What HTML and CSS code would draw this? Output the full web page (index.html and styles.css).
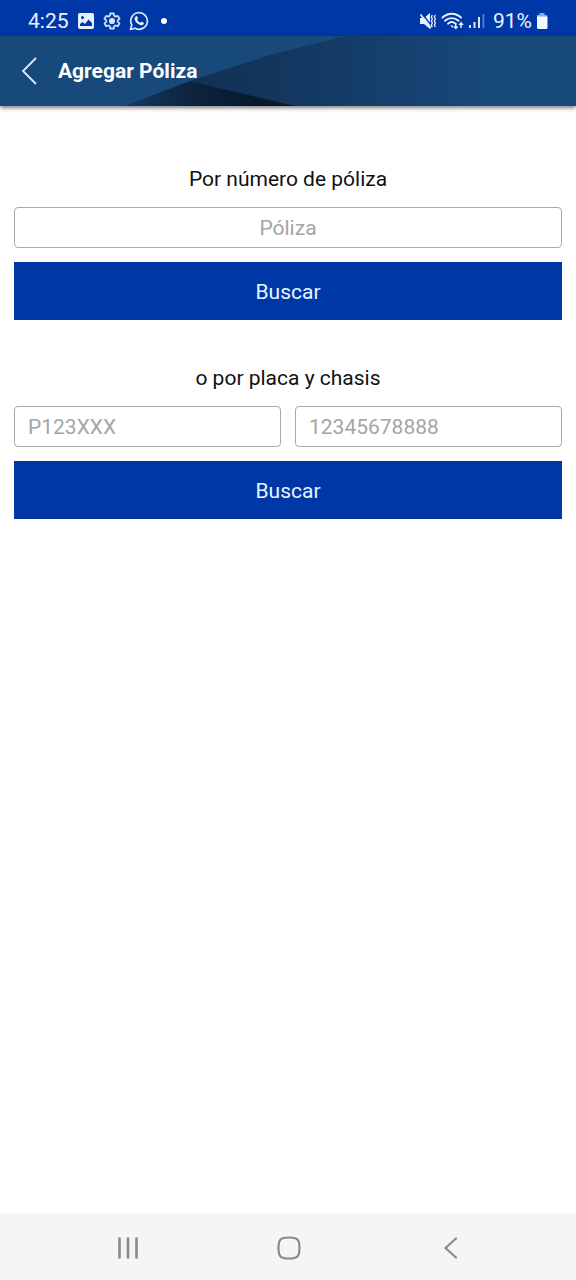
FILE: index.html
```html
<!DOCTYPE html>
<html lang="es">
<head>
  <meta charset="UTF-8">
  <meta name="viewport" content="width=device-width, initial-scale=1.0">
  <title>Agregar Póliza</title>
  <link rel="stylesheet" href="styles.css">
</head>
<body>
  <div class="status-bar">
    <div class="status-left">
      <span>4:25</span>
      <svg width="18" height="18" viewBox="0 0 18 18">
        <path fill="#e9f1ff" fill-rule="evenodd" d="M3 1h12a2 2 0 0 1 2 2v12a2 2 0 0 1-2 2H3a2 2 0 0 1-2-2V3a2 2 0 0 1 2-2zM5.500 4a1.500 1.500 0 1 0 0 3 1.500 1.500 0 0 0 0-3zM3 14h12V11l-3.500-3.500L8 12l-2.500-2L3 12z"/>
      </svg>
      <svg width="18" height="18" viewBox="0 0 18 18" fill="none" stroke="#cfe0ff" stroke-width="1.800" stroke-linejoin="round">
        <path d="M7.300 1.500h3.400l.5 2.300 1.400.8 2.200-.7 1.700 2.900-1.700 1.500v1.500l1.700 1.500-1.700 2.900-2.200-.7-1.400.8-.5 2.200H7.300l-.5-2.200-1.400-.8-2.200.7-1.700-2.900 1.700-1.500V8.300L1.500 6.800l1.700-2.900 2.200.7 1.400-.8z"/>
        <circle cx="9" cy="9" r="2.200" fill="#e9f1ff"/>
      </svg>
      <svg width="20" height="20" viewBox="0 0 20 20">
        <path fill="none" stroke="#dbe8ff" stroke-width="1.700" stroke-linejoin="round" d="M1.500 18.500l1.300-4.600a8.300 8.300 0 1 1 3.300 3.300z"/>
        <path fill="#e9f1ff" d="M7.200 5.200c.5-.2.900 0 1.100.5l.6 1.500c.2.500-.7 1.100-.7 1.500.6 1.400 1.700 2.400 3.100 3 .5 0 1-1.100 1.500-.9l1.600.8c.5.300.4.800.2 1.300-.5 1-1.600 1.500-2.700 1.300-3.100-.6-5.700-3-6.300-6.100-.2-1.200.4-2.500 1.600-2.900z"/>
      </svg>
      <span class="dot"></span>
    </div>
    <div class="status-right">
      <div class="signals">
        <svg width="18" height="18" viewBox="0 0 18 18">
          <path fill="#e9f1ff" d="M1 6h4l6-5v16L5 12H1z"/>
          <path fill="none" stroke="#0037a6" stroke-width="1.400" d="M3 1.500l10 13"/>
          <path fill="none" stroke="#e9f1ff" stroke-width="1.700" d="M1.500 2.500L12 16"/>
          <path fill="none" stroke="#e9f1ff" stroke-width="1.300" d="M13.300 3l-.9 2 .9 2-.9 2 .9 2-.9 2 .9 2M16.300 3l-.9 2 .9 2-.9 2 .9 2-.9 2 .9 2"/>
        </svg>
        <svg width="24" height="18" viewBox="0 0 24 18">
          <g fill="none" stroke="#e9f1ff" stroke-width="1.900" stroke-linecap="round">
            <path d="M1.500 5.500c5.500-5 13-5 18.500 0M4 8.700c4-3.500 9.500-3.500 13.500 0M7 11.700c2.300-2 5.200-2 7.500 0"/>
          </g>
          <path fill="#e9f1ff" d="M14 11h1.500v3.500h2L14.800 17.500 12 14.500h2zM19.300 16h1.500v-3h2L20 9.500 17.500 13h1.800zM9 13.500h3L12 16z"/>
        </svg>
        <svg width="16" height="18" viewBox="0 0 16 18" fill="#dbe8ff">
          <path d="M0 13h2v3H0zM4.500 10h2v6h-2zM9 5h2v11H9z"/>
          <path opacity=".4" d="M13.500 2h1.800v14h-1.800z"/>
        </svg>
      </div>
      <div class="battery">
        <span>91%</span>
        <svg width="12" height="18" viewBox="0 0 12 18">
          <path fill="#8eabe6" d="M3.500 1h5v2H11v3H1V3h2.500z"/>
          <path fill="#f4f8ff" d="M1 4.500h10.500v11a1.500 1.500 0 0 1-1.500 1.500H2.500A1.500 1.500 0 0 1 1 15.500z"/>
        </svg>
      </div>
    </div>
  </div>

  <header class="header">
    <svg class="header-art" viewBox="0 0 576 70" preserveAspectRatio="none">
      <defs>
        <linearGradient id="fade" gradientUnits="userSpaceOnUse" x1="190" y1="0" x2="480" y2="0">
          <stop offset="0" stop-color="#123052"/>
          <stop offset=".5" stop-color="#143b66"/>
          <stop offset="1" stop-color="#17487a"/>
        </linearGradient>
        <linearGradient id="dark" gradientUnits="userSpaceOnUse" x1="125" y1="0" x2="250" y2="0">
          <stop offset="0" stop-color="#153a62"/>
          <stop offset=".5" stop-color="#0d2440"/>
          <stop offset="1" stop-color="#081a2e"/>
        </linearGradient>
      </defs>
      <path fill="url(#fade)" d="M190 45L270 19 345 0H480V70H295z"/>
      <path fill="url(#dark)" d="M125 70L190 45 295 70z"/>
    </svg>
    <button class="back" type="button" aria-label="Volver">
      <svg width="18" height="30" viewBox="0 0 18 30" fill="none" stroke="#dcecff" stroke-width="1.800">
        <path d="M16 2L3 15l13 13"/>
      </svg>
    </button>
    <h1>Agregar Póliza</h1>
  </header>

  <main>
    <form class="search">
      <label for="poliza">Por número de póliza</label>
      <input class="centered" id="poliza" type="text" placeholder="Póliza">
      <button class="submit" type="button">Buscar</button>
    </form>

    <form class="search">
      <label for="placa">o por placa y chasis</label>
      <div class="fields">
        <input id="placa" type="text" placeholder="P123XXX">
        <input id="chasis" type="text" placeholder="12345678888" aria-label="Chasis">
      </div>
      <button class="submit" type="button">Buscar</button>
    </form>
  </main>

  <nav class="nav-bar">
    <button type="button" aria-label="Recientes">
      <svg width="24" height="24" viewBox="0 0 24 24" stroke="#8a8a8a" stroke-width="2.600" stroke-linecap="round">
        <path d="M3.500 2.500v19M12 2.500v19M20.500 2.500v19"/>
      </svg>
    </button>
    <button type="button" aria-label="Inicio">
      <svg width="24" height="24" viewBox="0 0 24 24" fill="none" stroke="#8a8a8a" stroke-width="2.200">
        <path d="M12 1.500c8.500 0 10.500 2 10.500 10.500S20.500 22.500 12 22.500 1.500 20.500 1.500 12 3.500 1.500 12 1.500z"/>
      </svg>
    </button>
    <button type="button" aria-label="Atrás">
      <svg width="24" height="24" viewBox="0 0 24 24" fill="none" stroke="#8a8a8a" stroke-width="2.200" stroke-linecap="round">
        <path d="M18 2.500L7.500 12 18 21.500"/>
      </svg>
    </button>
  </nav>
</body>
</html>
```

FILE: styles.css
```css
* {
  box-sizing: border-box;
}

body {
  display: flex;
  flex-direction: column;
  min-height: 100vh;
  margin: 0;
  background-color: #fff;
  font-family: Roboto, sans-serif;
  font-size: 21px;
  line-height: 28px;
  color: #111;
}

svg {
  display: block;
}

button {
  padding: 0;
  border: none;
  background: none;
  font: inherit;
  cursor: pointer;
}

.status-bar {
  display: flex;
  justify-content: space-between;
  align-items: center;
  height: 36px;
  padding: 6px 28px 0;
  background-color: #0037a6;
  color: #e9f1ff;
}

.status-left,
.status-right {
  display: flex;
  align-items: center;
  gap: 8px;
}

.signals,
.battery {
  display: flex;
  align-items: center;
  gap: 4px;
}

.dot {
  width: 6px;
  height: 6px;
  margin-left: 4px;
  border-radius: 50%;
  background-color: #fff;
}

.header {
  position: relative;
  display: flex;
  align-items: center;
  gap: 20px;
  height: 70px;
  padding: 0 20px;
  background-color: #17497b;
  box-shadow: 0 2px 4px rgba(0, 0, 0, 0.5);
  color: #fff;
}

.header-art {
  position: absolute;
  inset: 0;
  width: 100%;
  height: 100%;
}

.header h1,
.back {
  position: relative;
}

.header h1 {
  margin: 0;
  font-size: 21px;
  font-weight: 700;
}

main {
  flex: 1;
  display: flex;
  flex-direction: column;
  gap: 44px;
  padding: 59px 14px 0;
}

.search {
  display: flex;
  flex-direction: column;
  gap: 14px;
}

.search label {
  text-align: center;
}

.search input {
  width: 100%;
  min-width: 0;
  height: 41px;
  padding: 0 13px;
  border: 1px solid #aaa;
  border-radius: 4px;
  background-color: #fff;
  font: inherit;
  color: #111;
}

.search input::placeholder {
  color: #a5a5a5;
  opacity: 1;
}

.search .centered {
  text-align: center;
}

.fields {
  display: flex;
  gap: 14px;
}

.submit {
  height: 58px;
  padding-top: 2px;
  background-color: #0037a6;
  color: #e9f5ff;
}

.nav-bar {
  display: flex;
  justify-content: space-around;
  align-items: center;
  height: 67px;
  padding: 2px 46px 0 48px;
  background-color: #f5f5f5;
}
```
